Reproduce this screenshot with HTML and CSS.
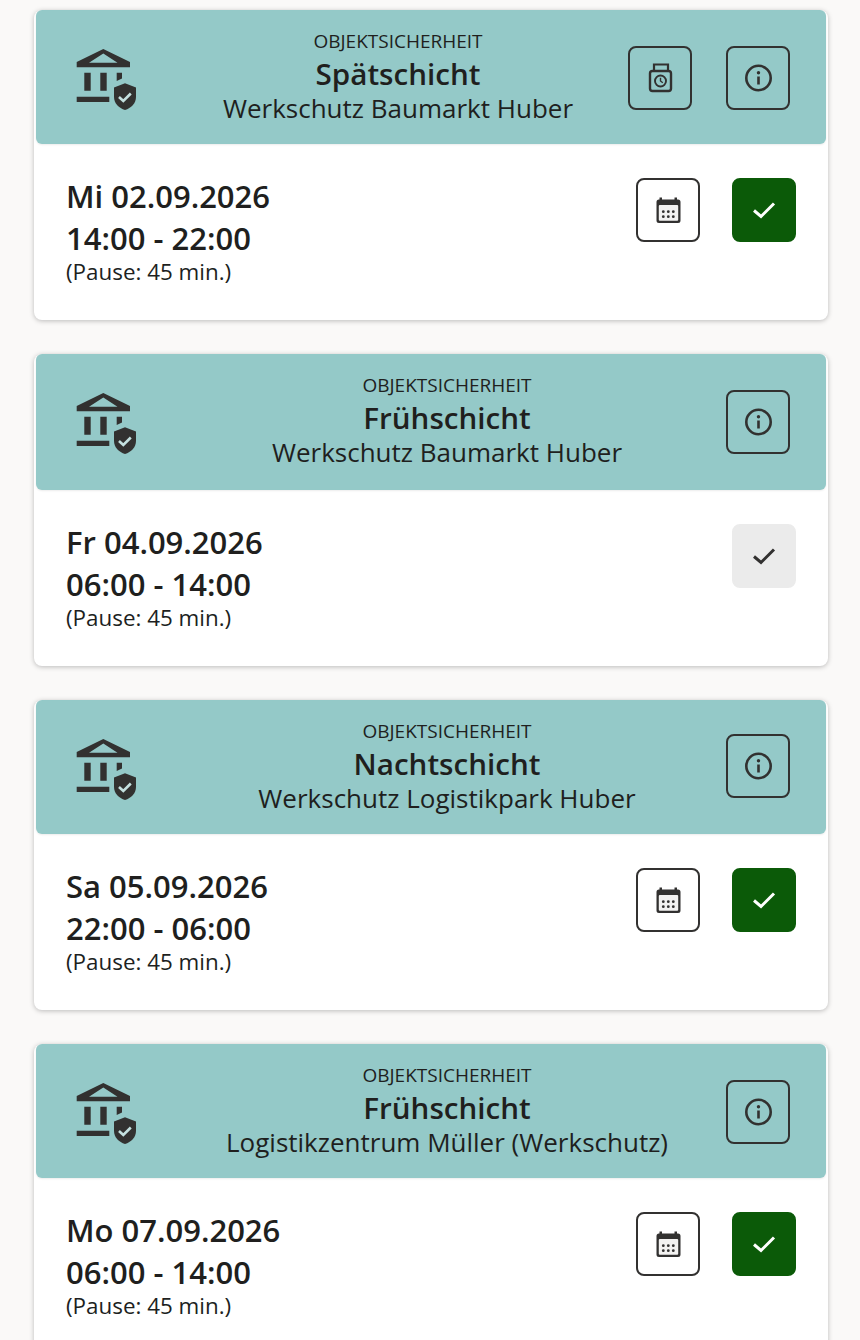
FILE: index.html
```html
<!DOCTYPE html>
<html lang="de">
<head>
    <meta charset="UTF-8">
    <title>Schichten</title>
    <link rel="stylesheet" href="styles.css">
</head>
<body>
    <svg class="sprites" width="0" height="0">
        <symbol id="icon-object" viewBox="0 0 64 64">
            <path fill="#323130" fill-rule="evenodd" d="M29.3 2 56 15v5.3H2.700V15zM29.300 6.500 15 15.700h28.500z"/>
            <path fill="#323130" d="M10.300 25.700h6.400v18h-6.400zM26.300 25.700h6.400v18h-6.400zM42.700 25.700H48v5.800l-5.300 2.600zM2.700 49.700h32.600V55H2.700z"/>
            <path fill="#323130" d="M51 36.300 62 40.500V50C62 56.500 57 61 51 63 45 61 40 56.500 40 50V40.500z"/>
            <path fill="none" stroke="#c4e0df" stroke-width="2.600" d="m45 50 4.300 4 7.500-7.500"/>
        </symbol>
        <symbol id="icon-info" viewBox="0 0 32 32">
            <circle cx="16.500" cy="16" r="12.200" fill="none" stroke="#323130" stroke-width="2.600"/>
            <circle cx="16.500" cy="10.800" r="1.700" fill="#323130"/>
            <path stroke="#323130" stroke-width="2.600" d="M16.500 14.500v8"/>
        </symbol>
        <symbol id="icon-timesheet" viewBox="0 0 32 32">
            <rect x="6" y="9" width="21" height="20" rx="2.500" fill="none" stroke="#323130" stroke-width="2.400"/>
            <path fill="none" stroke="#323130" stroke-width="2.200" d="M10 9V2.500h14V9"/>
            <circle cx="16.500" cy="19" r="5.500" fill="none" stroke="#323130" stroke-width="1.900"/>
            <path fill="none" stroke="#323130" stroke-width="1.400" d="M16.500 15.800V19l2.300 1.800"/>
        </symbol>
        <symbol id="icon-calendar" viewBox="0 0 32 32">
            <path fill="#323130" d="M7 5.500h.500v-2H10v2h12.500v-2H25v2h1a2.500 2.500 0 0 1 2.500 2.500v18.500A2.500 2.500 0 0 1 26 29H7a2.500 2.500 0 0 1-2.500-2.500V8A2.500 2.500 0 0 1 7 5.500z"/>
            <rect x="6.800" y="11" width="19.400" height="15.800" rx="1" fill="#f3f2f1"/>
            <g fill="#323130">
                <circle cx="11.300" cy="17.700" r="1.400"/><circle cx="16.300" cy="17.700" r="1.400"/><circle cx="21.300" cy="17.700" r="1.400"/>
                <circle cx="11.300" cy="22.700" r="1.400"/><circle cx="16.300" cy="22.700" r="1.400"/><circle cx="21.300" cy="22.700" r="1.400"/>
            </g>
        </symbol>
        <symbol id="icon-check" viewBox="0 0 32 32">
            <path fill="none" stroke="currentColor" stroke-width="3" d="m6 16.500 7 6L26 9.500"/>
        </symbol>
    </svg>

    <div class="list">
        <div class="card">
            <div class="card-head">
                <svg class="object-icon"><use href="#icon-object"/></svg>
                <div class="head-text">
                    <div class="overline">OBJEKTSICHERHEIT</div>
                    <div class="shift">Spätschicht</div>
                    <div class="site">Werkschutz Baumarkt Huber</div>
                </div>
                <button class="btn"><svg><use href="#icon-timesheet"/></svg></button>
                <button class="btn"><svg><use href="#icon-info"/></svg></button>
            </div>
            <div class="card-body">
                <div class="when">
                    <div class="date">Mi 02.09.2026</div>
                    <div class="date">14:00 - 22:00</div>
                    <div class="pause">(Pause: 45 min.)</div>
                </div>
                <button class="btn"><svg><use href="#icon-calendar"/></svg></button>
                <button class="btn btn-confirm"><svg><use href="#icon-check"/></svg></button>
            </div>
        </div>

        <div class="card">
            <div class="card-head">
                <svg class="object-icon"><use href="#icon-object"/></svg>
                <div class="head-text">
                    <div class="overline">OBJEKTSICHERHEIT</div>
                    <div class="shift">Frühschicht</div>
                    <div class="site">Werkschutz Baumarkt Huber</div>
                </div>
                <button class="btn"><svg><use href="#icon-info"/></svg></button>
            </div>
            <div class="card-body">
                <div class="when">
                    <div class="date">Fr 04.09.2026</div>
                    <div class="date">06:00 - 14:00</div>
                    <div class="pause">(Pause: 45 min.)</div>
                </div>
                <button class="btn btn-done" disabled><svg><use href="#icon-check"/></svg></button>
            </div>
        </div>

        <div class="card">
            <div class="card-head">
                <svg class="object-icon"><use href="#icon-object"/></svg>
                <div class="head-text">
                    <div class="overline">OBJEKTSICHERHEIT</div>
                    <div class="shift">Nachtschicht</div>
                    <div class="site">Werkschutz Logistikpark Huber</div>
                </div>
                <button class="btn"><svg><use href="#icon-info"/></svg></button>
            </div>
            <div class="card-body">
                <div class="when">
                    <div class="date">Sa 05.09.2026</div>
                    <div class="date">22:00 - 06:00</div>
                    <div class="pause">(Pause: 45 min.)</div>
                </div>
                <button class="btn"><svg><use href="#icon-calendar"/></svg></button>
                <button class="btn btn-confirm"><svg><use href="#icon-check"/></svg></button>
            </div>
        </div>

        <div class="card">
            <div class="card-head">
                <svg class="object-icon"><use href="#icon-object"/></svg>
                <div class="head-text">
                    <div class="overline">OBJEKTSICHERHEIT</div>
                    <div class="shift">Frühschicht</div>
                    <div class="site">Logistikzentrum Müller (Werkschutz)</div>
                </div>
                <button class="btn"><svg><use href="#icon-info"/></svg></button>
            </div>
            <div class="card-body">
                <div class="when">
                    <div class="date">Mo 07.09.2026</div>
                    <div class="date">06:00 - 14:00</div>
                    <div class="pause">(Pause: 45 min.)</div>
                </div>
                <button class="btn"><svg><use href="#icon-calendar"/></svg></button>
                <button class="btn btn-confirm"><svg><use href="#icon-check"/></svg></button>
            </div>
        </div>
    </div>
</body>
</html>
```

FILE: styles.css
```css
/* Page */
html, body {
    height: 1340px;
    overflow: hidden;
}

body {
    margin: 0;
    background-color: #faf9f8;
    color: #201f1e;
    font-family: "Open Sans", "Noto Sans", sans-serif;
}

.sprites {
    display: none;
}

.list {
    display: flex;
    flex-direction: column;
    gap: 34px;
    padding: 10px 32px 0 34px;
}

/* Card */
.card {
    padding: 0 2px;
    background-color: #ffffff;
    border-radius: 8px;
    box-shadow: 0 1px 5px rgba(0, 0, 0, 0.25);
}

.card-head {
    display: flex;
    align-items: center;
    gap: 34px;
    box-sizing: border-box;
    height: 134px;
    padding: 2px 36px 0 40px;
    background-color: #94c9c8;
    border-radius: 6px;
    box-shadow: 0 1px 2px rgba(0, 0, 0, 0.08);
}

/* second card runs 2px taller, third has its buttons a little higher */
.card:nth-child(2) .card-head {
    height: 136px;
    padding-top: 0;
}

.card:nth-child(3) .card-head .btn {
    margin-top: -4px;
}

.object-icon {
    flex: none;
    width: 64px;
    height: 64px;
    margin-top: 2px;
    margin-left: -2px;
}

.head-text {
    flex: 1;
    margin-top: -2px;
    margin-right: -34px;
    margin-left: -4px;
    text-align: center;
}

.overline {
    margin-bottom: 1.500px;
    font-size: 19px;
    line-height: 24px;
}

.shift {
    margin-bottom: -1.500px;
    font-size: 29.6px;
    font-weight: 600;
    line-height: 38px;
}

.site {
    font-size: 26px;
    line-height: 34px;
}

/* Body */
.card-body {
    display: flex;
    align-items: flex-start;
    gap: 32px;
    height: 142px;
    padding: 34px 30px 0;
}

.when {
    flex: 1;
    margin-top: -3px;
}

.date {
    font-size: 31px;
    font-weight: 600;
    line-height: 42px;
}

.pause {
    font-size: 22.4px;
    line-height: 26px;
}

/* Buttons */
.btn {
    display: flex;
    flex: none;
    align-items: center;
    justify-content: center;
    width: 64px;
    height: 64px;
    padding: 0;
    background: transparent;
    border: 2px solid #323130;
    border-radius: 8px;
    color: #323130;
    cursor: pointer;
}

.btn svg {
    width: 32px;
    height: 32px;
}

.btn-confirm {
    background-color: #0b5a08;
    border-color: #0b5a08;
    color: #ffffff;
}

.btn-done {
    background-color: #ebebeb;
    border-color: #ebebeb;
    color: #323130;
}
```
